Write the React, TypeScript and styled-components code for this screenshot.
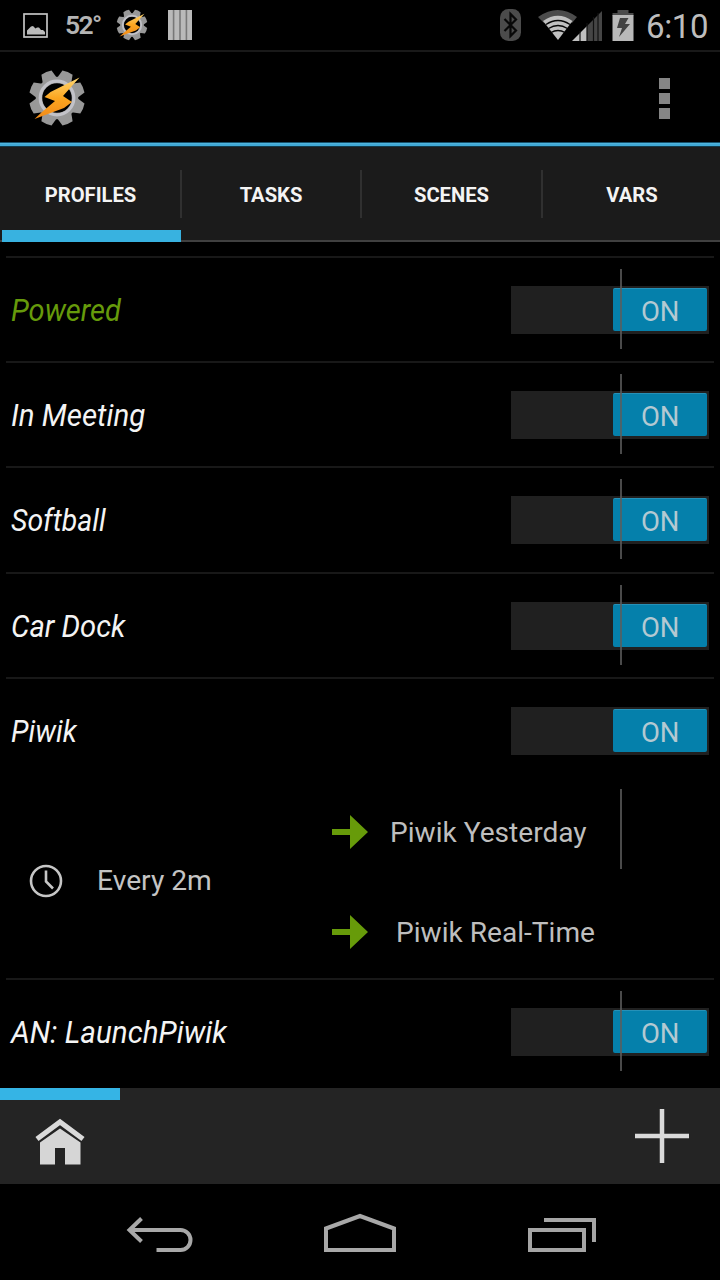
import React from "react";
import styled, { createGlobalStyle } from "styled-components";

const GlobalStyle = createGlobalStyle`
  * { box-sizing: border-box; }
  html, body { margin: 0; padding: 0; background: #000; }
  body { font-family: Roboto, "Liberation Sans", sans-serif; overflow: hidden; }
  svg { display: block; flex: none; }
  button { border: 0; padding: 0; margin: 0; background: none; font: inherit; color: inherit; }
`;

const Screen = styled.div`
  width: 720px;
  height: 1280px;
  display: flex;
  flex-direction: column;
  background: #000;
  overflow: hidden;
`;

const StatusBar = styled.header`
  height: 52px;
  flex: none;
  display: flex;
  align-items: flex-start;
  justify-content: space-between;
  padding: 0 12px 0 23px;
  border-bottom: 2px solid #191919;
  color: #bdbdbd;
`;

const StatusGroup = styled.div`
  display: flex;
  height: 50px;
  align-items: center;
`;

const Temperature = styled.span`
  width: 55px;
  padding-left: 16px;
  font-size: 26.5px;
  line-height: 50px;
  font-weight: 600;
  letter-spacing: -1.6px;
  color: #b4b4b4;
`;

const Clock = styled.span`
  font-size: 33px;
  line-height: 50px;
  padding-top: 3px;
  letter-spacing: -0.4px;
  margin-left: 12px;
  width: 62px;
  white-space: nowrap;
`;

const Spaced = styled.span<{ $left: number; $top?: number }>`
  display: block;
  margin-left: ${(p) => p.$left}px;
  margin-top: ${(p) => p.$top ?? 0}px;
`;

const ActionBar = styled.div`
  height: 90px;
  flex: none;
  display: flex;
  align-items: center;
  justify-content: space-between;
  padding: 1px 50px 0 28px;
`;

const Overflow = styled.button`
  display: grid;
  gap: 4px;
  margin-top: 2px;
`;

const Dot = styled.span`
  width: 11px;
  height: 11px;
  background: #858585;
`;

const Accent = styled.div`
  height: 5px;
  flex: none;
  background: linear-gradient(#16506b 0 1px, #4fb4dd 1px 2px, #41a9d6 2px 4px, #10394a 4px);
`;

const Tabs = styled.nav`
  height: 95px;
  flex: none;
  display: grid;
  grid-template-columns: 181px 180px 181px 178px;
  background: #1b1b1b;
`;

const Tab = styled.button<{ $active?: boolean }>`
  position: relative;
  display: flex;
  align-items: center;
  justify-content: center;
  padding-top: 2px;
  border-bottom: 2px solid #404040;
  font-size: 20.2px;
  font-weight: 700;
  color: #f4f4f4;

  &:not(:last-child)::before {
    content: "";
    position: absolute;
    right: -1px;
    top: 23px;
    width: 2px;
    height: 48px;
    background: #303030;
  }

  &:last-child {
    padding-left: 2px;
  }

  &::after {
    content: "";
    display: ${(p) => (p.$active ? "block" : "none")};
    position: absolute;
    left: 2px;
    right: 0;
    bottom: -2px;
    height: 12px;
    background: #38b2e0;
  }
`;

const ProfileList = styled.main`
  flex: 1;
  padding-top: 14px;
`;

const Profile = styled.section<{ $height: number }>`
  height: ${(p) => p.$height}px;
  margin: 0 6px;
  border-top: 2px solid #181818;
`;

const ProfileHeader = styled.div`
  position: relative;
  height: 104px;
  padding: 0 5px 0 5px;
  display: flex;
  align-items: center;
  justify-content: space-between;
`;

const ProfileName = styled.span<{ $active?: boolean; $stretch: number }>`
  font-size: 30.5px;
  line-height: 36px;
  font-style: italic;
  transform: scaleX(${(p) => p.$stretch});
  transform-origin: 0 50%;
  color: ${(p) => (p.$active ? "#669a0b" : "#f4f4f4")};
  padding-top: 2px;
`;

const Track = styled.button`
  width: 198px;
  height: 48px;
  padding: 2px 2px 3px 0;
  display: flex;
  justify-content: flex-end;
  background: #202020;
`;

const Thumb = styled.span`
  width: 94px;
  height: 43px;
  border-radius: 2px;
  border-top: 1px solid #2691b8;
  background: #0580ab;
  display: flex;
  align-items: center;
  justify-content: center;
  padding-top: 2px;
  font-size: 27.5px;
  letter-spacing: -0.3px;
  color: #b3c9d2;
`;

const Marker = styled.i<{ $top: number }>`
  position: absolute;
  left: 614px;
  top: ${(p) => p.$top}px;
  width: 2px;
  height: 80px;
  background: rgba(92, 92, 92, 0.8);
`;

const Details = styled.div`
  position: relative;
  display: grid;
  grid-template-columns: 325px 1fr;
  height: 195px;
  margin-top: -1px;
`;

const Trigger = styled.div`
  display: flex;
  align-items: center;
  gap: 34px;
  padding: 0 0 3px 23px;
  font-size: 28.2px;
  color: #c4c4c4;
`;

const Actions = styled.div`
  display: flex;
  flex-direction: column;
`;

const Action = styled.div<{ $gap: number }>`
  height: 100px;
  display: flex;
  align-items: center;
  gap: ${(p) => p.$gap}px;
  font-size: 28.1px;
  color: #bebebe;
`;

const BottomBar = styled.div`
  height: 96px;
  flex: none;
  background: #242424;
`;

const Progress = styled.div`
  width: 120px;
  height: 12px;
  background: #35b4e5;
`;

const BottomActions = styled.div`
  height: 84px;
  display: flex;
  justify-content: space-between;
  padding: 9px 31px 0 34px;
`;

const NavBar = styled.footer`
  height: 96px;
  flex: none;
  display: flex;
  justify-content: space-between;
  padding: 28px 123px 0 126px;
`;

const GEAR_TEETH = [22.5, 67.5, 112.5, 157.5, 202.5, 247.5, 292.5, 337.5];

function TaskerIcon({ size, id }: { size: number; id: string }) {
  return (
    <svg width={size} height={size} viewBox="0 0 58 58">
      <defs>
        <linearGradient id={id} x1="0" y1="0" x2="0" y2="1">
          <stop offset="0" stopColor="#ffd873" />
          <stop offset="0.5" stopColor="#fca51f" />
          <stop offset="1" stopColor="#f08a1a" />
        </linearGradient>
      </defs>
      <g fill="#989898">
        {GEAR_TEETH.map((a) => (
          <path key={a} d="M21 12L23.500 1.500Q29 .3 34.500 1.500L37 12Z" transform={`rotate(${a} 29 29)`} />
        ))}
      </g>
      <circle cx="29" cy="29" r="18" fill="none" stroke="#999" strokeWidth="6.500" />
      <circle cx="29" cy="29" r="16.800" fill="none" stroke="#c2c2c8" strokeWidth="3.200" />
      <path d="M51.500 8.500L22.500 23L16.500 28L27 32L14 43L6.500 50L36 39L44 33L35 27Z" fill={`url(#${id})`} />
    </svg>
  );
}

function GalleryIcon() {
  return (
    <svg width="26" height="26" viewBox="0 0 26 26">
      <rect x="1" y="1" width="23" height="23" fill="none" stroke="#c4c4c4" strokeWidth="1.700" />
      <path d="M4 21.500V17.500L8 13.500L10 13L12.500 15.500L14 14.500L16 14.500L18 17L20 17L22 19V21.500Z" fill="#bbb" />
    </svg>
  );
}

function BarsIcon() {
  return (
    <svg width="25" height="30" viewBox="0 0 25 30">
      <rect width="24" height="30" fill="#777" />
      {[0, 6.4, 12.8, 19.2].map((x) => (
        <rect key={x} x={x} width="4.800" height="30" fill="#b9b9b9" />
      ))}
    </svg>
  );
}

function BluetoothIcon() {
  return (
    <svg width="22" height="32" viewBox="0 0 22 32">
      <rect x="0" y="0" width="21" height="32" rx="8.500" fill="#4b4b4b" />
      <path d="M4.500 10L16 21.500L10.500 27V5L16 10.500L4.500 22" fill="none" stroke="#080808" strokeWidth="2.200" />
    </svg>
  );
}

function SignalIcons() {
  return (
    <svg width="65" height="32" viewBox="0 0 65 32">
      <path d="M0 8Q20 -6 39 8L34 14Q20 3 6 14Z" fill="#4b4b4b" />
      <path d="M5 12Q20 1.500 34.500 12L20 31Z" fill="#c0c0c0" />
      <g fill="none" stroke="#050505" strokeWidth="1.400">
        <path d="M8 15.500Q20 7.500 32 15.500" />
        <path d="M10.500 19.500Q20 13.500 29.500 19.500" />
        <path d="M13 23.500Q20 19.500 27 23.500" />
      </g>
      <path d="M34 32L49 17V32Z" fill="#c0c0c0" />
      <path d="M49 17L64 2V32H49Z" fill="#454545" />
      <g stroke="#111" strokeWidth="1.200">
        <path d="M42 22V32M49 14V32M55.500 8V32M60 4V32" />
      </g>
    </svg>
  );
}

function BatteryIcon() {
  return (
    <svg width="22" height="32" viewBox="0 0 22 32">
      <path d="M5.500 1H16.500V4H21.500V7H.5V4H5.500Z" fill="#4b4b4b" />
      <rect x=".5" y="6" width="21" height="26" fill="#b9b9b9" />
      <path d="M8 9L16.500 9L13 15H18L7 28L10 19H5Z" fill="#424242" />
    </svg>
  );
}

function ClockIcon() {
  return (
    <svg width="34" height="34" viewBox="0 0 34 34" fill="none" stroke="#c6c6c6" strokeWidth="2.600">
      <circle cx="17" cy="17" r="15" />
      <path d="M17 6.500V17.500L24 24.500" />
    </svg>
  );
}

function ArrowIcon() {
  return (
    <svg width="37" height="36" viewBox="0 0 37 36" fill="#679b0a">
      <path d="M1 15H19V1L37 18L19 35V21H1Z" />
    </svg>
  );
}

function HomeIcon() {
  return (
    <svg width="52" height="50" viewBox="0 0 52 50">
      <path d="M3 22L26 5L49 22" fill="none" stroke="#dadada" strokeWidth="5.200" />
      <path d="M6 25.500L26 11.500L46.500 25.500V47.500H31V31H21V47.500H6Z" fill="#d6d6d6" />
    </svg>
  );
}

function PlusIcon() {
  return (
    <svg width="54" height="54" viewBox="0 0 54 54" stroke="#dadada" strokeWidth="4.500">
      <path d="M27 0V54M0 27H54" />
    </svg>
  );
}

function BackIcon() {
  return (
    <svg width="68" height="48" viewBox="0 0 68 48" fill="none" stroke="#a8a8a8" strokeWidth="4">
      <path d="M15.500 6.500L3.500 18L15.500 29.500" />
      <path d="M4 18H54.500A10 10 0 0 1 54.500 38H30.500" />
    </svg>
  );
}

function NavHomeIcon() {
  return (
    <svg width="74" height="48" viewBox="0 0 74 48" fill="none" stroke="#a8a8a8" strokeWidth="4">
      <path d="M2 16.500L36 4L70 16.500V38H2Z" />
    </svg>
  );
}

function RecentsIcon() {
  return (
    <svg width="70" height="48" viewBox="0 0 70 48" fill="none" stroke="#a5a5a5" strokeWidth="4">
      <path d="M3 18H57V38H3Z" />
      <path d="M17 8H67V30" />
    </svg>
  );
}

type ProfileData = { name: string; height: number; stretch: number; active?: boolean; detailed?: boolean };

const PROFILES: ProfileData[] = [
  { name: "Powered", height: 105, stretch: 0.952, active: true },
  { name: "In Meeting", height: 105, stretch: 0.967 },
  { name: "Softball", height: 106, stretch: 0.932 },
  { name: "Car Dock", height: 105, stretch: 0.956 },
  { name: "Piwik", height: 301, stretch: 0.935, detailed: true },
  { name: "AN: LaunchPiwik", height: 108, stretch: 0.973 },
];

function ProfileRow({ profile }: { profile: ProfileData }) {
  return (
    <Profile $height={profile.height}>
      <ProfileHeader>
        <ProfileName $active={profile.active} $stretch={profile.stretch}>{profile.name}</ProfileName>
        <Track role="switch" aria-checked="true">
          <Thumb>ON</Thumb>
        </Track>
        {!profile.detailed && <Marker $top={11} />}
      </ProfileHeader>
      {profile.detailed && (
        <Details>
          <Trigger>
            <ClockIcon />
            <span>Every 2m</span>
          </Trigger>
          <Actions>
            <Action $gap={22}>
              <ArrowIcon />
              <span>Piwik Yesterday</span>
            </Action>
            <Action $gap={28}>
              <ArrowIcon />
              <span>Piwik Real-Time</span>
            </Action>
          </Actions>
          <Marker $top={7} />
        </Details>
      )}
    </Profile>
  );
}

export default function App() {
  return (
    <Screen>
      <GlobalStyle />
      <StatusBar>
        <StatusGroup>
          <Spaced $left={0} $top={2}><GalleryIcon /></Spaced>
          <Temperature>52°</Temperature>
          <Spaced $left={12}><TaskerIcon size={32} id="boltSmall" /></Spaced>
          <Spaced $left={20}><BarsIcon /></Spaced>
        </StatusGroup>
        <StatusGroup>
          <BluetoothIcon />
          <Spaced $left={16}><SignalIcons /></Spaced>
          <Spaced $left={9}><BatteryIcon /></Spaced>
          <Clock>6:10</Clock>
        </StatusGroup>
      </StatusBar>
      <ActionBar>
        <TaskerIcon size={58} id="boltLarge" />
        <Overflow aria-label="More options">
          <Dot />
          <Dot />
          <Dot />
        </Overflow>
      </ActionBar>
      <Accent />
      <Tabs>
        <Tab $active>PROFILES</Tab>
        <Tab>TASKS</Tab>
        <Tab>SCENES</Tab>
        <Tab>VARS</Tab>
      </Tabs>
      <ProfileList>
        {PROFILES.map((p) => (
          <ProfileRow key={p.name} profile={p} />
        ))}
      </ProfileList>
      <BottomBar>
        <Progress />
        <BottomActions>
          <Spaced $left={0} $top={8}><HomeIcon /></Spaced>
          <PlusIcon />
        </BottomActions>
      </BottomBar>
      <NavBar>
        <BackIcon />
        <NavHomeIcon />
        <RecentsIcon />
      </NavBar>
    </Screen>
  );
}
